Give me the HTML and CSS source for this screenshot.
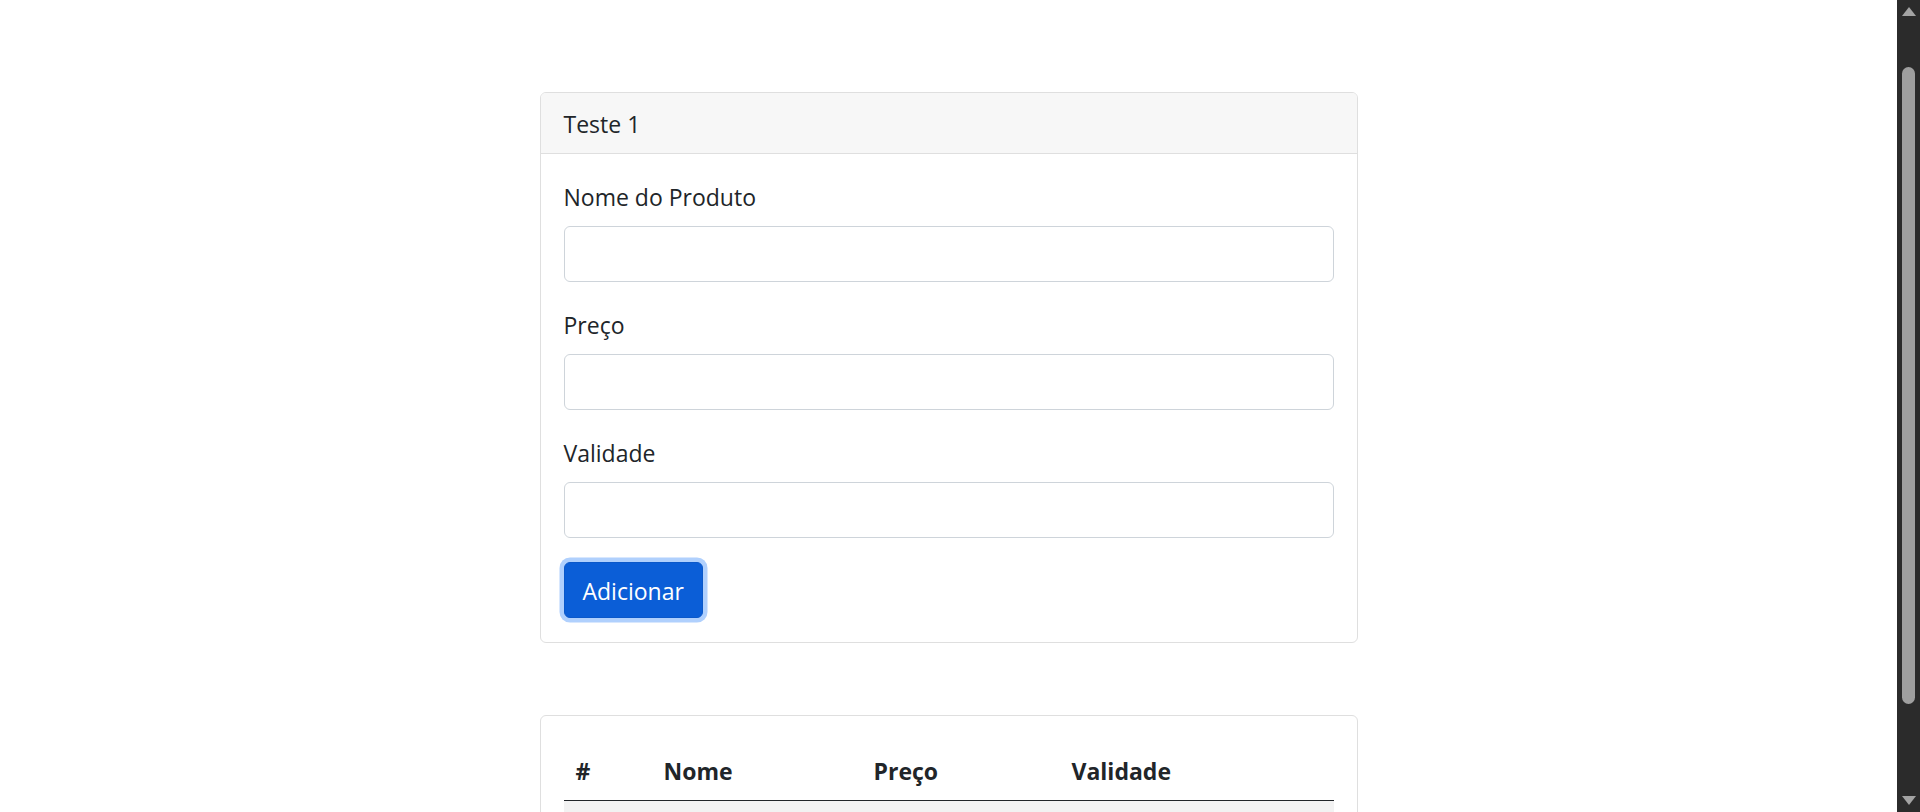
FILE: index.html
```html
<!DOCTYPE html>
<html lang="pt-BR">
<head>
<meta charset="utf-8">
<title>Produtos</title>
<link rel="stylesheet" href="styles.css">
</head>
<body>
<div class="viewport">
  <main class="page">
    <div class="wrap">
      <section class="card">
        <div class="card-header">Teste 1</div>
        <form class="card-body">
          <div class="field">
            <label class="label" for="nome">Nome do Produto</label>
            <input id="nome" class="input" type="text">
          </div>
          <div class="field">
            <label class="label" for="preco">Preço</label>
            <input id="preco" class="input" type="text">
          </div>
          <div class="field">
            <label class="label" for="validade">Validade</label>
            <input id="validade" class="input" type="text">
          </div>
          <button type="button" class="btn">Adicionar</button>
        </form>
      </section>

      <section class="card card-table">
        <div class="card-body">
          <table class="table">
            <thead>
              <tr>
                <th class="c-id">#</th>
                <th class="c-nome">Nome</th>
                <th class="c-preco">Preço</th>
                <th class="c-validade">Validade</th>
              </tr>
            </thead>
            <tbody>
              <tr class="striped">
                <td>&nbsp;</td>
                <td>&nbsp;</td>
                <td>&nbsp;</td>
                <td>&nbsp;</td>
              </tr>
            </tbody>
          </table>
        </div>
      </section>
    </div>
  </main>
  <aside class="scrollbar" aria-hidden="true">
    <span class="sb-btn"><span class="arrow arrow-up"></span></span>
    <span class="sb-track"><span class="thumb"></span></span>
    <span class="sb-btn"><span class="arrow arrow-down"></span></span>
  </aside>
</div>
</body>
</html>
```

FILE: styles.css
```css
* {
  box-sizing: border-box;
}

html,
body {
  margin: 0;
  height: 100%;
  overflow: hidden;
  background: #ffffff;
}

body {
  font-family: "Open Sans", "Noto Sans", sans-serif;
  font-size: 23px;
  line-height: 36px;
  color: #212529;
}

.viewport {
  display: flex;
  height: 100vh;
}

.page {
  flex: 1;
  min-width: 0;
  padding-top: 92px;
}

.wrap {
  width: 818px;
  margin: 0 auto;
  display: flex;
  flex-direction: column;
  gap: 72px;
}

.card {
  border: 1px solid #dfdfdf;
  border-radius: 6px;
  background: #ffffff;
  overflow: hidden;
}

.card-header {
  background: #f7f7f7;
  border-bottom: 1px solid #dfdfdf;
  padding: 13px 23px 11px;
  height: 61px;
}

.card-body {
  padding: 24px 23px;
  display: flex;
  flex-direction: column;
  align-items: flex-start;
}

.field {
  align-self: stretch;
  display: flex;
  flex-direction: column;
  margin-bottom: 24px;
}

.label {
  padding-top: 1px;
  margin-bottom: 11px;
}

.input {
  display: block;
  width: 100%;
  height: 56px;
  border: 1px solid #ced4da;
  border-radius: 6px;
  padding: 9px 18px;
  font: inherit;
  background: #ffffff;
}

.btn {
  font: inherit;
  color: #ffffff;
  background: #0b5ed7;
  border: 1px solid #0a58ca;
  border-radius: 6px;
  padding: 10px 18px 8px;
  height: 56px;
  box-shadow: 0 0 0 4.5px #b0d0fd;
  cursor: pointer;
}

.table {
  width: 100%;
  border-collapse: collapse;
}

.table th {
  text-align: left;
  font-weight: 700;
  padding: 13px 12px 11px;
  border-bottom: 1px solid #212529;
}

.table td {
  padding: 12px;
}

.c-id {
  width: 88px;
}

.c-nome {
  width: 210px;
}

.c-preco {
  width: 198px;
}

.striped td {
  background: #f2f2f2;
}

.scrollbar {
  width: 23px;
  flex: none;
  background: #2b2b2b;
  display: flex;
  flex-direction: column;
}

.sb-btn {
  height: 23px;
  display: flex;
  align-items: center;
  justify-content: center;
  flex: none;
}

.arrow {
  width: 0;
  height: 0;
  border-left: 7.5px solid transparent;
  border-right: 7.5px solid transparent;
}

.arrow-up {
  border-bottom: 9px solid #a3a3a3;
}

.arrow-down {
  border-top: 9px solid #a3a3a3;
}

.sb-track {
  flex: 1;
  padding: 44px 0 0 5px;
}

.thumb {
  display: block;
  width: 13px;
  height: 637px;
  border-radius: 7px;
  background: #9f9f9f;
}
```
